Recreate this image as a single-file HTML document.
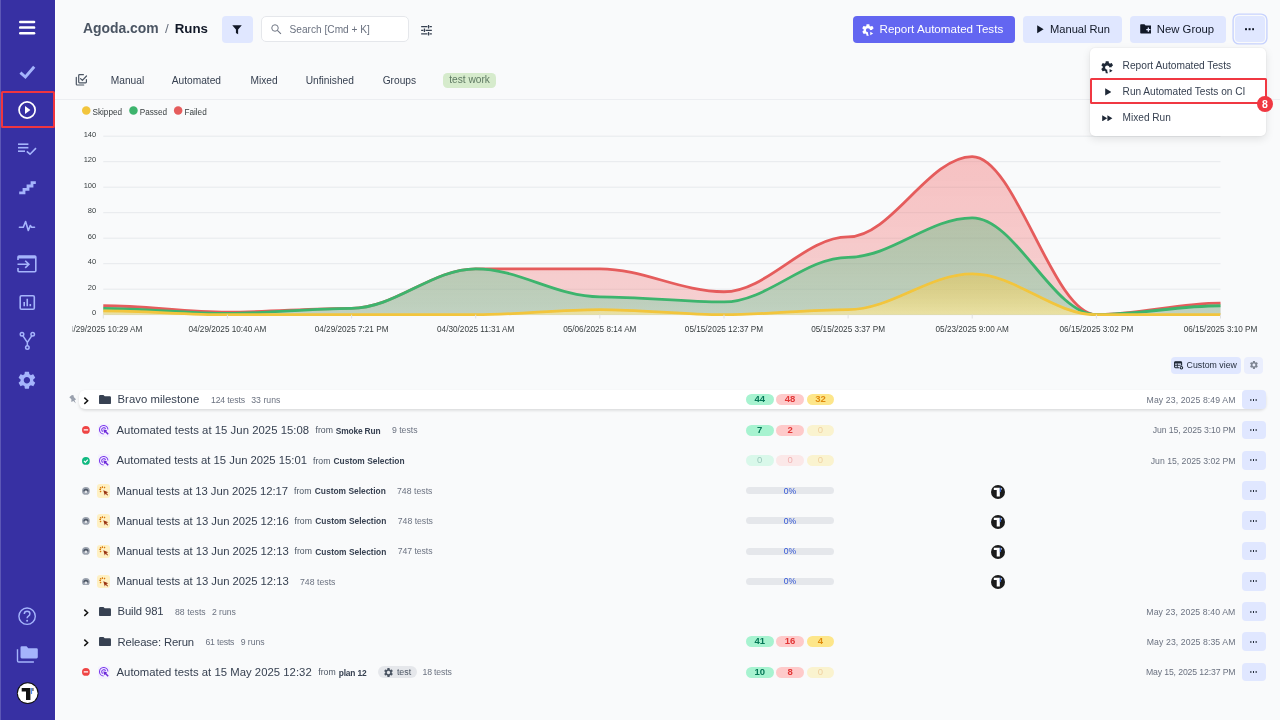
<!DOCTYPE html>
<html lang="en">
<head>
<meta charset="utf-8">
<title>Runs</title>
<style>
*{box-sizing:border-box;margin:0;padding:0}
html,body{width:1280px;height:720px;overflow:hidden}
body{background:#f9fafb;font-family:"Liberation Sans",sans-serif;color:#374151;position:relative}
#app{position:absolute;left:0;top:0;width:1280px;height:720px;will-change:transform}
.abs{position:absolute;display:block}
.tx{position:absolute;white-space:nowrap;line-height:16px;display:block}
#side{position:absolute;left:0;top:0;width:55.200px;height:720px;background:#3730a3;box-shadow:inset 1px 0 0 #5d57b6}
#side svg{position:absolute;display:block}
.sel{position:absolute;left:1.200px;top:90.900px;width:54px;height:36.700px;border:2.200px solid #f0353f;border-radius:1.500px}
.btn{position:absolute;top:16px;height:26.500px;border-radius:4px;background:#e0e7ff}
.btn.pri{background:#6366f1}
.btn svg{position:absolute}
#search{position:absolute;left:261.250px;top:16px;width:147.250px;height:26px;border:1px solid #e5e7eb;border-radius:5px;background:#fff}
.tag{position:absolute;left:443.250px;top:73px;width:52.250px;height:14.500px;border-radius:4.500px;background:#d6ebcc}
.hr{position:absolute;left:55px;right:0;top:98.500px;height:1px;background:#eceef1}
.leg{position:absolute;top:106.300px;width:8.500px;height:8.500px;border-radius:50%}
.ax{font-size:8.200px;fill:#373d3f;font-family:"Liberation Sans",sans-serif}
.ay{font-size:7.500px;fill:#373d3f;font-family:"Liberation Sans",sans-serif;dominant-baseline:central}
#menu{position:absolute;left:1089.500px;top:48.300px;width:176px;height:87.300px;background:#fff;border-radius:5px;box-shadow:0 3px 8px rgba(0,0,0,.10),0 0 2px rgba(0,0,0,.10)}
.hl{position:absolute;left:1090.100px;top:78.300px;width:177px;height:26.200px;border:2.100px solid #f03842;border-radius:1.500px}
.n8{position:absolute;left:1257px;top:96.300px;width:16px;height:16px;border-radius:50%;background:#f03842}
.cv{position:absolute;left:1170.600px;top:356.500px;width:70.700px;height:17.250px;border-radius:4px;background:#e0e7ff}
.cg{position:absolute;left:1244.100px;top:356.500px;width:18.800px;height:17.250px;border-radius:4px;background:#eaeefd}
.rowbg{position:absolute;left:78.750px;width:1187px;height:18.450px;background:#fff;border-radius:6px;box-shadow:0 1.500px 3px rgba(0,0,0,.13),0 0 1px rgba(0,0,0,.06)}
.mb{position:absolute;left:1241.500px;width:24px;height:18.800px;border-radius:4px;background:#e0e7ff}
.dots{position:absolute;left:1252.900px;width:1.600px;height:2px;background:#1f2937;box-shadow:2.650px 0 #1f2937,-2.650px 0 #1f2937}
.pill{position:absolute;width:27.700px;height:11px;border-radius:5.500px;font-size:9.500px;line-height:10.700px;text-align:center}
.bar{position:absolute;left:746.250px;width:88px;height:7px;border-radius:3.500px;background:#e5e7eb}
</style>
</head>
<body>
<div id="app">

<!-- SIDEBAR -->
<div id="side">
<svg style="left:0;top:0" width="56" height="720" viewBox="0 0 56 720">
  <!-- hamburger -->
  <g fill="#fff"><rect x="19" y="20.700" width="16.300" height="2.500" rx="1.200"/><rect x="19" y="26.350" width="16.300" height="2.500" rx="1.200"/><rect x="19" y="32" width="16.300" height="2.500" rx="1.200"/></g>
  <!-- check -->
  <path d="M20.400 72.600 L25.400 77 L34.200 66.700" fill="none" stroke="#a5b4fc" stroke-width="2.900"/>
  <!-- play circle -->
  <circle cx="27.100" cy="110" r="8.050" fill="none" stroke="#fff" stroke-width="1.700"/><path d="M25 105.900 L30.400 110 L25 114.100 Z" fill="#fff"/>
  <!-- list check -->
  <g stroke="#a5b4fc" stroke-width="1.600" fill="none"><path d="M18 144.200 H28.400"/><path d="M18 147.700 H28.400"/><path d="M18 151.200 H25"/><path d="M26.800 151.300 L30 154.200 L36 148.100"/></g>
  <!-- stairs -->
  <path d="M19.200 192.800 H24 V189.400 H28 V186 H32 V182.700 H35.800" fill="none" stroke="#a5b4fc" stroke-width="2.800" stroke-linejoin="miter"/>
  <!-- pulse -->
  <path d="M19.400 227.300 H23.300 L25.600 221.500 L28.300 230.500 L30.300 225.500 L31.600 227.300 H34.500" fill="none" stroke="#a5b4fc" stroke-width="1.600" stroke-linejoin="round" stroke-linecap="round"/>
  <!-- import -->
  <path d="M18 260 V257.100 Q18 256.100 19 256.100 H34.800 Q35.800 256.100 35.800 257.100 V270.800 Q35.800 271.800 34.800 271.800 H19 Q18 271.800 18 270.800 V268" fill="none" stroke="#a5b4fc" stroke-width="1.600"/><path d="M18 257.300 H35.800" stroke="#a5b4fc" stroke-width="2.400"/><path d="M17.500 264.300 H28.500 M25.200 260.700 L28.900 264.300 L25.200 267.900" fill="none" stroke="#a5b4fc" stroke-width="1.600"/>
  <!-- chart -->
  <rect x="20.200" y="295.800" width="14.100" height="13.400" rx="1.300" fill="none" stroke="#a5b4fc" stroke-width="1.600"/><path d="M24.200 302 V306.300 M27.250 298.800 V306.300 M30.300 304 V306.300" stroke="#a5b4fc" stroke-width="1.600"/>
  <!-- fork -->
  <g fill="none" stroke="#a5b4fc" stroke-width="1.500"><circle cx="22" cy="334.300" r="1.750"/><circle cx="32.700" cy="334.300" r="1.750"/><circle cx="27.350" cy="347.600" r="1.750"/><path d="M22.800 335.700 L27.350 342.500 L31.900 335.700 M27.350 342.500 V346"/></g>
  <!-- gear -->
  <g transform="translate(16.300 369.600) scale(0.884)"><path fill="#a5b4fc" d="M19.14 12.94c.04-.3.06-.61.06-.94 0-.32-.02-.64-.07-.94l2.03-1.58a.49.49 0 0 0 .12-.61l-1.92-3.32a.488.488 0 0 0-.59-.22l-2.39.96c-.5-.38-1.03-.7-1.62-.94l-.36-2.54a.484.484 0 0 0-.48-.41h-3.84c-.24 0-.43.17-.47.41l-.36 2.54c-.59.24-1.13.57-1.62.94l-2.39-.96c-.22-.08-.47 0-.59.22L2.740 8.870c-.12.21-.08.47.12.61l2.030 1.580c-.05.3-.09.63-.09.94s.02.64.07.94l-2.030 1.580a.49.49 0 0 0-.12.61l1.920 3.320c.12.22.37.29.59.22l2.390-.96c.5.38 1.030.7 1.620.94l.36 2.540c.05.24.24.41.48.41h3.840c.24 0 .44-.17.47-.41l.36-2.540c.59-.24 1.130-.56 1.620-.94l2.390.96c.22.08.47 0 .59-.22l1.920-3.320c.12-.22.07-.47-.12-.61l-2.010-1.580zM12 15.600c-1.980 0-3.600-1.620-3.600-3.600s1.620-3.600 3.600-3.600 3.600 1.620 3.600 3.600-1.620 3.600-3.600 3.600z"/></g>
  <!-- help -->
  <circle cx="27.100" cy="616.200" r="8.200" fill="none" stroke="#a5b4fc" stroke-width="1.400"/><path d="M24.300 614 Q24.300 611.300 27.100 611.300 Q29.900 611.300 29.900 613.800 Q29.900 615.200 28.400 616.100 Q27.100 616.900 27.100 618.300" fill="none" stroke="#a5b4fc" stroke-width="1.500"/><circle cx="27.100" cy="620.700" r="1" fill="#a5b4fc"/>
  <!-- folders -->
  <path d="M21.800 646.200 H26.500 L28.300 648.200 H36.500 Q37.800 648.200 37.800 649.500 V657.100 Q37.800 658.400 36.500 658.400 H21.800 Q20.500 658.400 20.500 657.100 V647.500 Q20.500 646.200 21.800 646.200 Z" fill="#a5b4fc"/><path d="M17.500 649.200 V660.700 Q17.500 662 18.800 662 H33.900" fill="none" stroke="#a5b4fc" stroke-width="1.400"/>
  <!-- logo -->
  <circle cx="27.700" cy="693.200" r="10.850" fill="#111"/><circle cx="27.700" cy="693.200" r="9.850" fill="#fff"/><path d="M21.700 687.900 H30.400 V700 H26 V691.400 H21.700 Z" fill="#111"/><path d="M30.900 688 H32.100 V694 H30.900 Z" fill="#4f8df5"/><path d="M32.500 688 H33.400 V691 H32.500 Z" fill="#111"/>
</svg>
<div class="sel"></div>
</div>

<div id="strip" class="abs" style="left:55.200px;top:0;width:2.200px;height:720px;background:linear-gradient(90deg,#ffffff,#f9fafb)"></div>
<!-- HEADER -->
<div class="btn" style="left:222px;width:31px"><svg style="left:10.200px;top:8px" width="10.050" height="11.550" viewBox="0 0 11 11"><path d="M0.300 0.500 H10.700 L6.700 5.300 V10.500 L4.300 9 V5.300 Z" fill="#111827"/></svg></div>
<div id="search"><svg style="position:absolute;left:8.750px;top:7.300px" width="10.500" height="10.500" viewBox="0 0 11 11"><circle cx="4.200" cy="4.200" r="3.400" fill="none" stroke="#6b7280" stroke-width="1"/><path d="M6.700 6.700 L10.400 10.400" stroke="#6b7280" stroke-width="1.100"/></svg></div>
<svg class="abs" style="left:419.800px;top:24px" width="13" height="12.500" viewBox="0 0 14 14"><g stroke="#374151" stroke-width="1.400" fill="none"><path d="M1 3 H8 M10.500 3 H13 M9.300 1 V5"/><path d="M1 7 H3.500 M6 7 H13 M4.700 5 V9"/><path d="M1 11 H8 M10.500 11 H13 M9.300 9 V13"/></g></svg>

<div class="btn pri" style="left:852.500px;width:162.300px"><svg style="left:8.700px;top:7.300px" width="13.900" height="13.900" viewBox="0 0 24 24"><path fill="#fff" d="M13.54 22H10C9.75 22 9.54 21.82 9.5 21.58L9.13 18.93C8.5 18.68 7.96 18.34 7.44 17.94L4.95 18.95C4.73 19.03 4.46 18.95 4.34 18.73L2.34 15.27C2.21 15.05 2.27 14.78 2.46 14.63L4.57 12.97L4.5 12L4.57 11L2.46 9.37C2.27 9.22 2.21 8.95 2.34 8.73L4.34 5.27C4.46 5.05 4.73 4.96 4.95 5.05L7.44 6.05C7.96 5.66 8.5 5.32 9.13 5.07L9.5 2.42C9.54 2.18 9.75 2 10 2H14C14.25 2 14.46 2.18 14.5 2.42L14.87 5.07C15.5 5.32 16.04 5.66 16.56 6.05L19.05 5.05C19.27 4.96 19.54 5.05 19.66 5.27L21.66 8.73C21.79 8.95 21.73 9.22 21.54 9.37L19.43 11L19.5 12V12.19C19 12.07 18.5 12 18 12C17.17 12 16.39 12.18 15.68 12.5C15.59 10.5 14 9 12 9C10.07 9 8.5 10.57 8.5 12.5C8.5 14.43 10.07 16 12 16C12.04 16 12.09 16 12.14 16C12.05 16.32 12 16.66 12 17C12 18.95 12.57 20.7 13.54 22M16 15V21L21 18L16 15Z"/></svg></div>
<div class="btn" style="left:1023px;width:99px"><svg style="left:13.700px;top:9.300px" width="7" height="8.400" viewBox="0 0 7 8.400"><path d="M0.200 0.200 L6.600 4.200 L0.200 8.200 Z" fill="#111827"/></svg></div>
<div class="btn" style="left:1130px;width:96px"><svg style="left:9.700px;top:8.400px" width="11.800" height="9.800" viewBox="0 0 12 10"><path d="M1 0.300 H4.500 L5.700 1.600 H11 Q11.800 1.600 11.800 2.400 V9 Q11.800 9.800 11 9.800 H1 Q0.200 9.800 0.200 9 V1.100 Q0.200 0.300 1 0.300 Z" fill="#111827"/><path d="M8.500 3.600 V7.800 M6.400 5.700 H10.600" stroke="#e0e7ff" stroke-width="1.300"/></svg></div>
<div class="btn" style="left:1234.500px;width:30.700px;height:26px;box-shadow:0 0 0 1.200px #f9fafb,0 0 0 2.600px #c7d2fe"><svg style="left:10.700px;top:12.200px" width="9.200" height="2.400" viewBox="0 0 9.200 2.400"><rect x="0" y="0.200" width="2" height="2" fill="#111827"/><rect x="3.600" y="0.200" width="2" height="2" fill="#111827"/><rect x="7.200" y="0.200" width="2" height="2" fill="#111827"/></svg></div>

<!-- TABS -->
<svg class="abs" style="left:70px;top:70px" width="20" height="20" viewBox="70 70 20 20"><g fill="none" stroke="#4b5563" stroke-width="1.200" stroke-linecap="round"><path d="M83.400 74.700 H79.500 Q78.700 74.700 78.700 75.500 V82.100 Q78.700 82.900 79.500 82.900 H85.600 Q86.400 82.900 86.400 82.100 V79.600"/><path d="M76.300 77.400 V84.200 Q76.300 85 77.100 85 H83.700"/><path d="M80.500 78.600 L82.400 80.300 L86.500 76"/></g></svg>
<div class="tag"></div>
<div class="hr"></div>

<!-- LEGEND -->
<!-- CHART -->
<svg class="abs" style="left:0;top:0" width="1280" height="345" viewBox="0 0 1280 345">
<defs>
<clipPath id="cl"><rect x="72.500" y="100" width="1200" height="245"/></clipPath>
<linearGradient id="gf" x1="0" y1="0" x2="0" y2="1"><stop offset="0" stop-color="#ef4444" stop-opacity=".31"/><stop offset="1" stop-color="#f06060" stop-opacity=".27"/></linearGradient>
<linearGradient id="gp" x1="0" y1="0" x2="0" y2="1"><stop offset="0" stop-color="#3db46d" stop-opacity=".35"/><stop offset="1" stop-color="#7fd3ae" stop-opacity=".46"/></linearGradient>
<linearGradient id="gs" x1="0" y1="0" x2="0" y2="1"><stop offset="0" stop-color="#f2c53d" stop-opacity=".42"/><stop offset="1" stop-color="#fae696" stop-opacity=".7"/></linearGradient>
</defs>
<circle cx="86.250" cy="110.550" r="4.250" fill="#f2c53d"/><circle cx="133.450" cy="110.550" r="4.250" fill="#3db46d"/><circle cx="178.150" cy="110.550" r="4.250" fill="#e55c5c"/>
<g clip-path="url(#cl)">
<line x1="103.3" x2="1220.5" y1="314.7" y2="314.7" stroke="#e7e9ec" stroke-width="1"/>
<text x="96.2" y="312.8" text-anchor="end" class="ay">0</text>
<line x1="103.3" x2="1220.5" y1="289.2" y2="289.2" stroke="#e7e9ec" stroke-width="1"/>
<text x="96.2" y="287.3" text-anchor="end" class="ay">20</text>
<line x1="103.3" x2="1220.5" y1="263.7" y2="263.7" stroke="#e7e9ec" stroke-width="1"/>
<text x="96.2" y="261.8" text-anchor="end" class="ay">40</text>
<line x1="103.3" x2="1220.5" y1="238.2" y2="238.2" stroke="#e7e9ec" stroke-width="1"/>
<text x="96.2" y="236.3" text-anchor="end" class="ay">60</text>
<line x1="103.3" x2="1220.5" y1="212.7" y2="212.7" stroke="#e7e9ec" stroke-width="1"/>
<text x="96.2" y="210.8" text-anchor="end" class="ay">80</text>
<line x1="103.3" x2="1220.5" y1="187.2" y2="187.2" stroke="#e7e9ec" stroke-width="1"/>
<text x="96.2" y="185.3" text-anchor="end" class="ay">100</text>
<line x1="103.3" x2="1220.5" y1="161.7" y2="161.7" stroke="#e7e9ec" stroke-width="1"/>
<text x="96.2" y="159.8" text-anchor="end" class="ay">120</text>
<line x1="103.3" x2="1220.5" y1="136.2" y2="136.2" stroke="#e7e9ec" stroke-width="1"/>
<text x="96.2" y="134.3" text-anchor="end" class="ay">140</text>
<path d="M103.30 305.77 C146.75 305.77 183.99 312.15 227.43 312.15 C270.88 312.15 308.12 308.32 351.57 308.32 C395.01 308.32 432.25 268.80 475.70 268.80 C519.15 268.80 556.39 268.80 599.83 268.80 C643.28 268.80 680.52 291.75 723.97 291.75 C767.41 291.75 804.65 236.92 848.10 236.92 C891.55 236.92 928.79 156.60 972.23 156.60 C1015.68 156.60 1052.92 314.70 1096.37 314.70 C1139.81 314.70 1177.05 303.22 1220.50 303.22 L1220.5 314.7 L103.3 314.7 Z" fill="url(#gf)"/>
<path d="M103.30 305.77 C146.75 305.77 183.99 312.15 227.43 312.15 C270.88 312.15 308.12 308.32 351.57 308.32 C395.01 308.32 432.25 268.80 475.70 268.80 C519.15 268.80 556.39 268.80 599.83 268.80 C643.28 268.80 680.52 291.75 723.97 291.75 C767.41 291.75 804.65 236.92 848.10 236.92 C891.55 236.92 928.79 156.60 972.23 156.60 C1015.68 156.60 1052.92 314.70 1096.37 314.70 C1139.81 314.70 1177.05 303.22 1220.50 303.22" fill="none" stroke="#e55c5c" stroke-width="2.8" stroke-linecap="butt"/>
<path d="M103.30 308.32 C146.75 308.32 183.99 313.43 227.43 313.43 C270.88 313.43 308.12 308.32 351.57 308.32 C395.01 308.32 432.25 268.80 475.70 268.80 C519.15 268.80 556.39 296.85 599.83 296.85 C643.28 296.85 680.52 301.95 723.97 301.95 C767.41 301.95 804.65 257.32 848.10 257.32 C891.55 257.32 928.79 217.80 972.23 217.80 C1015.68 217.80 1052.92 314.70 1096.37 314.70 C1139.81 314.70 1177.05 305.77 1220.50 305.77 L1220.5 314.7 L103.3 314.7 Z" fill="url(#gp)"/>
<path d="M103.30 308.32 C146.75 308.32 183.99 313.43 227.43 313.43 C270.88 313.43 308.12 308.32 351.57 308.32 C395.01 308.32 432.25 268.80 475.70 268.80 C519.15 268.80 556.39 296.85 599.83 296.85 C643.28 296.85 680.52 301.95 723.97 301.95 C767.41 301.95 804.65 257.32 848.10 257.32 C891.55 257.32 928.79 217.80 972.23 217.80 C1015.68 217.80 1052.92 314.70 1096.37 314.70 C1139.81 314.70 1177.05 305.77 1220.50 305.77" fill="none" stroke="#3db46d" stroke-width="2.8" stroke-linecap="butt"/>
<path d="M103.30 310.88 C146.75 310.88 183.99 314.70 227.43 314.70 C270.88 314.70 308.12 314.70 351.57 314.70 C395.01 314.70 432.25 314.70 475.70 314.70 C519.15 314.70 556.39 309.60 599.83 309.60 C643.28 309.60 680.52 314.70 723.97 314.70 C767.41 314.70 804.65 309.60 848.10 309.60 C891.55 309.60 928.79 273.90 972.23 273.90 C1015.68 273.90 1052.92 314.70 1096.37 314.70 C1139.81 314.70 1177.05 314.70 1220.50 314.70 L1220.5 314.7 L103.3 314.7 Z" fill="url(#gs)"/>
<path d="M103.30 310.88 C146.75 310.88 183.99 314.70 227.43 314.70 C270.88 314.70 308.12 314.70 351.57 314.70 C395.01 314.70 432.25 314.70 475.70 314.70 C519.15 314.70 556.39 309.60 599.83 309.60 C643.28 309.60 680.52 314.70 723.97 314.70 C767.41 314.70 804.65 309.60 848.10 309.60 C891.55 309.60 928.79 273.90 972.23 273.90 C1015.68 273.90 1052.92 314.70 1096.37 314.70 C1139.81 314.70 1177.05 314.70 1220.50 314.70" fill="none" stroke="#f2c53d" stroke-width="2.8" stroke-linecap="butt"/>
<line x1="103.3" x2="103.3" y1="314.7" y2="318.5" stroke="#e0e0e0"/>
<text x="103.3" y="332.3" text-anchor="middle" class="ax">04/29/2025 10:29 AM</text>
<line x1="227.4" x2="227.4" y1="314.7" y2="318.5" stroke="#e0e0e0"/>
<text x="227.4" y="332.3" text-anchor="middle" class="ax">04/29/2025 10:40 AM</text>
<line x1="351.6" x2="351.6" y1="314.7" y2="318.5" stroke="#e0e0e0"/>
<text x="351.6" y="332.3" text-anchor="middle" class="ax">04/29/2025 7:21 PM</text>
<line x1="475.7" x2="475.7" y1="314.7" y2="318.5" stroke="#e0e0e0"/>
<text x="475.7" y="332.3" text-anchor="middle" class="ax">04/30/2025 11:31 AM</text>
<line x1="599.8" x2="599.8" y1="314.7" y2="318.5" stroke="#e0e0e0"/>
<text x="599.8" y="332.3" text-anchor="middle" class="ax">05/06/2025 8:14 AM</text>
<line x1="724.0" x2="724.0" y1="314.7" y2="318.5" stroke="#e0e0e0"/>
<text x="724.0" y="332.3" text-anchor="middle" class="ax">05/15/2025 12:37 PM</text>
<line x1="848.1" x2="848.1" y1="314.7" y2="318.5" stroke="#e0e0e0"/>
<text x="848.1" y="332.3" text-anchor="middle" class="ax">05/15/2025 3:37 PM</text>
<line x1="972.2" x2="972.2" y1="314.7" y2="318.5" stroke="#e0e0e0"/>
<text x="972.2" y="332.3" text-anchor="middle" class="ax">05/23/2025 9:00 AM</text>
<line x1="1096.4" x2="1096.4" y1="314.7" y2="318.5" stroke="#e0e0e0"/>
<text x="1096.4" y="332.3" text-anchor="middle" class="ax">06/15/2025 3:02 PM</text>
<line x1="1220.5" x2="1220.5" y1="314.7" y2="318.5" stroke="#e0e0e0"/>
<text x="1220.5" y="332.3" text-anchor="middle" class="ax">06/15/2025 3:10 PM</text>
</g>
</svg>

<!-- DROPDOWN -->
<div id="menu">
  <svg class="abs" style="left:10.100px;top:11.400px" width="14.400" height="14.400" viewBox="0 0 24 24"><path fill="#1f2937" d="M13.54 22H10C9.75 22 9.54 21.82 9.5 21.58L9.13 18.93C8.5 18.68 7.96 18.34 7.44 17.94L4.95 18.95C4.73 19.03 4.46 18.95 4.34 18.73L2.34 15.27C2.21 15.05 2.27 14.78 2.46 14.63L4.57 12.97L4.5 12L4.57 11L2.46 9.37C2.27 9.22 2.21 8.95 2.34 8.73L4.34 5.27C4.46 5.05 4.73 4.96 4.95 5.05L7.44 6.05C7.96 5.66 8.5 5.32 9.13 5.07L9.5 2.42C9.54 2.18 9.75 2 10 2H14C14.25 2 14.46 2.18 14.5 2.42L14.87 5.07C15.5 5.32 16.04 5.66 16.56 6.05L19.05 5.05C19.27 4.96 19.54 5.05 19.66 5.27L21.66 8.73C21.79 8.95 21.73 9.22 21.54 9.37L19.43 11L19.5 12V12.19C19 12.07 18.5 12 18 12C17.17 12 16.39 12.18 15.68 12.5C15.59 10.5 14 9 12 9C10.07 9 8.5 10.57 8.5 12.5C8.5 14.43 10.07 16 12 16C12.04 16 12.09 16 12.14 16C12.05 16.32 12 16.66 12 17C12 18.95 12.57 20.7 13.54 22M16 15V21L21 18L16 15Z"/></svg>
  <svg class="abs" style="left:15.300px;top:40.100px" width="6.600" height="7.800" viewBox="0 0 6.600 7.800"><path d="M0.200 0.200 L6.400 3.900 L0.200 7.600 Z" fill="#1f2937"/></svg>
  <svg class="abs" style="left:12.700px;top:66.600px" width="10.600" height="6.600" viewBox="0 0 10.600 6.600"><path d="M0.200 0.200 L5.200 3.300 L0.200 6.400 Z M5.400 0.200 L10.400 3.300 L5.400 6.400 Z" fill="#1f2937"/></svg>
</div>
<div class="hl"></div>
<div class="n8"></div>

<!-- CUSTOM VIEW -->
<div class="cv"><svg class="abs" style="left:3.400px;top:4.300px" width="10" height="10" viewBox="0 0 10 10"><rect x="0.600" y="0.700" width="7" height="6" rx="0.900" fill="none" stroke="#1f2937" stroke-width="1.100"/><rect x="0.600" y="0.700" width="7" height="1.700" rx="0.500" fill="#1f2937"/><path d="M0.600 4.300 H7.600 M3.300 2.400 V6.700" stroke="#1f2937" stroke-width="0.900"/><circle cx="7.400" cy="6.700" r="2.300" fill="#e0e7ff"/><circle cx="7.400" cy="6.700" r="1.250" fill="none" stroke="#1f2937" stroke-width="1.100"/></svg></div>
<div class="cg"><svg class="abs" style="left:4.450px;top:3.700px" width="9.900" height="9.900" viewBox="0 0 24 24"><path fill="#7d8492" d="M19.140 12.940c.04-.3.060-.610.060-.940 0-.320-.020-.640-.070-.940l2.030-1.580a.490.490 0 0 0 .12-.610l-1.920-3.320a.488.488 0 0 0-.590-.220l-2.390.960c-.5-.380-1.030-.7-1.620-.940l-.360-2.540a.484.484 0 0 0-.480-.410h-3.840c-.240 0-.430.170-.470.410l-.360 2.540c-.590.240-1.130.570-1.620.940l-2.390-.960c-.220-.080-.470 0-.590.220L2.740 8.870c-.12.210-.080.470.12.610l2.030 1.580c-.050.3-.090.630-.090.940s.020.640.070.940l-2.030 1.580a.490.490 0 0 0-.12.610l1.920 3.320c.12.220.370.290.590.220l2.390-.960c.5.380 1.030.7 1.620.940l.360 2.540c.050.240.240.410.480.410h3.840c.240 0 .440-.170.470-.410l.360-2.540c.590-.240 1.130-.560 1.620-.940l2.390.960c.22.080.470 0 .590-.220l1.920-3.320c.12-.220.070-.470-.12-.610l-2.010-1.580zM12 15.600c-1.980 0-3.600-1.620-3.600-3.600s1.620-3.600 3.600-3.600 3.600 1.620 3.600 3.600-1.620 3.600-3.600 3.600z"/></svg></div>

<!-- ROWS -->
<div class="rowbg" style="top:390.35px"></div><svg class="abs" style="left:68.80px;top:394.90px" width="7.50" height="8.80" viewBox="0 0 7.500 8.800"><path d="M2.600 0.300 L4.300 0 L5 2.300 L7.300 4.400 L5.500 5.300 L6.900 8.600 L4.400 5.900 L2.300 6.900 L2.400 4.200 L0.300 2.200 Z" fill="#9aa1ae"/></svg><svg class="abs" style="left:82.50px;top:397.05px" width="6.00" height="7.50" viewBox="0 0 6 7.500"><path d="M1.300 0.600 L4.700 3.750 L1.300 6.900" fill="none" stroke="#111" stroke-width="1.450"/></svg><svg class="abs" style="left:99.00px;top:394.70px" width="12.00" height="9.20" viewBox="0 0 13 10"><path d="M1.200 0 H4.800 L6.200 1.400 H11.800 Q13 1.400 13 2.600 V8.800 Q13 10 11.800 10 H1.200 Q0 10 0 8.800 V1.200 Q0 0 1.200 0 Z" fill="#374152"/></svg><span class="tx" style="left:117.50px;top:391.20px;font-size:11.30px;color:#374151;letter-spacing:0.048px;">Bravo milestone</span><span class="tx" style="left:211.00px;top:391.92px;font-size:8.70px;color:#6b7280;letter-spacing:-0.145px;">124 tests</span><span class="tx" style="left:251.25px;top:391.92px;font-size:8.70px;color:#6b7280;letter-spacing:0.033px;">33 runs</span><span class="pill" style="left:745.90px;top:394.00px;background:#a7f3d0;color:#047857;font-weight:700;">44</span><span class="pill" style="left:776.25px;top:394.00px;background:#fecaca;color:#e23636;font-weight:700;">48</span><span class="pill" style="left:806.60px;top:394.00px;background:#fde68a;color:#e08a0b;font-weight:700;">32</span><span class="tx" style="left:1146.60px;top:391.70px;font-size:8.70px;color:#6b7280;letter-spacing:0.097px;">May 23, 2025 8:49 AM</span><span class="mb" style="top:390.10px"></span><span class="dots" style="top:398.50px"></span>
<svg class="abs" style="left:82.30px;top:426.40px" width="7.80" height="7.80" viewBox="0 0 8 8"><circle cx="4" cy="4" r="4" fill="#ef4444"/><rect x="1.700" y="3.300" width="4.600" height="1.400" rx="0.400" fill="#fff"/></svg><span class="abs" style="left:97.500px;top:424.05px;width:12.500px;height:12.500px;border-radius:3px;background:#f4f1fe"></span><svg class="abs" style="left:99.00px;top:425.30px" width="10.00" height="10.00" viewBox="0 0 10 10"><g fill="none" stroke="#7c3aed" stroke-width="1.050"><path d="M4.600 8.900 A4.200 4.200 0 1 1 8.900 4.600"/><path d="M4.200 6.600 A2 2 0 1 1 6.600 4.200"/></g><path d="M5.500 5.500 L9.200 9.200" stroke="#6d28d9" stroke-width="1.500"/><path d="M4.300 4.300 L8.200 5.400 L5.400 8.200 Z" fill="#6d28d9"/></svg><span class="tx" style="left:116.50px;top:422.00px;font-size:11.30px;color:#374151;letter-spacing:0.049px;">Automated tests at 15 Jun 2025 15:08</span><span class="tx" style="left:315.50px;top:422.42px;font-size:8.70px;color:#4b5563;letter-spacing:0.025px;">from</span><span class="tx" style="left:335.75px;top:422.52px;font-size:8.40px;color:#374151;font-weight:700;letter-spacing:-0.162px;">Smoke Run</span><span class="tx" style="left:392.00px;top:422.42px;font-size:8.70px;color:#6b7280;letter-spacing:-0.018px;">9 tests</span><span class="pill" style="left:745.90px;top:424.50px;background:#a7f3d0;color:#047857;font-weight:700;">7</span><span class="pill" style="left:776.25px;top:424.50px;background:#fecaca;color:#e23636;font-weight:700;">2</span><span class="pill" style="left:806.60px;top:424.50px;background:#fde68a;color:#e08a0b; opacity:.38;">0</span><span class="tx" style="left:1152.75px;top:422.20px;font-size:8.70px;color:#6b7280;letter-spacing:-0.114px;">Jun 15, 2025 3:10 PM</span><span class="mb" style="top:420.60px"></span><span class="dots" style="top:429.00px"></span>
<svg class="abs" style="left:82.30px;top:456.80px" width="7.80" height="7.80" viewBox="0 0 8 8"><circle cx="4" cy="4" r="4" fill="#10b981"/><path d="M2 4.100 L3.400 5.500 L6 2.700" fill="none" stroke="#fff" stroke-width="1.100"/></svg><span class="abs" style="left:97.500px;top:454.45px;width:12.500px;height:12.500px;border-radius:3px;background:#f4f1fe"></span><svg class="abs" style="left:99.00px;top:455.70px" width="10.00" height="10.00" viewBox="0 0 10 10"><g fill="none" stroke="#7c3aed" stroke-width="1.050"><path d="M4.600 8.900 A4.200 4.200 0 1 1 8.900 4.600"/><path d="M4.200 6.600 A2 2 0 1 1 6.600 4.200"/></g><path d="M5.500 5.500 L9.200 9.200" stroke="#6d28d9" stroke-width="1.500"/><path d="M4.300 4.300 L8.200 5.400 L5.400 8.200 Z" fill="#6d28d9"/></svg><span class="tx" style="left:116.50px;top:452.40px;font-size:11.30px;color:#374151;letter-spacing:-0.013px;">Automated tests at 15 Jun 2025 15:01</span><span class="tx" style="left:313.00px;top:452.82px;font-size:8.70px;color:#4b5563;letter-spacing:0.025px;">from</span><span class="tx" style="left:333.50px;top:452.92px;font-size:8.40px;color:#374151;font-weight:700;letter-spacing:0.019px;">Custom Selection</span><span class="pill" style="left:745.90px;top:454.90px;background:#a7f3d0;color:#047857; opacity:.38;">0</span><span class="pill" style="left:776.25px;top:454.90px;background:#fecaca;color:#e23636; opacity:.38;">0</span><span class="pill" style="left:806.60px;top:454.90px;background:#fde68a;color:#e08a0b; opacity:.38;">0</span><span class="tx" style="left:1150.80px;top:452.60px;font-size:8.70px;color:#6b7280;letter-spacing:-0.016px;">Jun 15, 2025 3:02 PM</span><span class="mb" style="top:451.00px"></span><span class="dots" style="top:459.40px"></span>
<svg class="abs" style="left:82.30px;top:487.00px" width="7.80" height="7.80" viewBox="0 0 8 8"><circle cx="4" cy="4" r="4" fill="#9ca3af"/><path d="M1.300 4.600 A2.700 2.700 0 0 1 6.700 4.600 Z" fill="#4b5563"/><circle cx="4" cy="5" r="1.300" fill="#e5e7eb"/></svg><span class="abs" style="left:97px;top:484.15px;width:13.300px;height:13.500px;border-radius:3px;background:#fef0c3"></span><svg class="abs" style="left:98.70px;top:485.90px" width="10.00" height="10.00" viewBox="0 0 10 10"><path d="M4.300 4.300 L9.300 6.200 L7.300 7.100 L9.100 8.900 L8.400 9.600 L6.600 7.800 L5.800 9.600 Z" fill="#9a3412"/><g stroke="#d97706" stroke-width="1.100"><path d="M3.400 0.300 V2 M0.300 3.400 H2 M1.100 1.100 L2.300 2.300 M6 0.900 L5 2.200 M0.900 6 L2.200 5"/></g></svg><span class="tx" style="left:116.50px;top:482.60px;font-size:11.30px;color:#374151;letter-spacing:-0.057px;">Manual tests at 13 Jun 2025 12:17</span><span class="tx" style="left:294.00px;top:483.02px;font-size:8.70px;color:#4b5563;letter-spacing:0.025px;">from</span><span class="tx" style="left:314.75px;top:483.12px;font-size:8.40px;color:#374151;font-weight:700;letter-spacing:0.019px;">Custom Selection</span><span class="tx" style="left:397.00px;top:483.02px;font-size:8.70px;color:#6b7280;letter-spacing:0.022px;">748 tests</span><span class="bar" style="top:487.20px"></span><span class="tx" style="left:783.75px;top:482.80px;font-size:8.65px;color:#2f54d6;">0%</span><svg class="abs" overflow="visible" style="left:990.50px;top:484.60px" width="14.00" height="14.00" viewBox="0 0 24 24"><circle cx="12" cy="12" r="13" fill="#fff"/><circle cx="12" cy="12" r="12" fill="#1b1b1b"/><path d="M4.800 4.500 H15.100 V19.500 H9.800 V8.700 H4.800 Z" fill="#fff"/><path d="M15.100 4.500 H16.800 V12.200 H15.100 Z" fill="#3f6fe0"/><path d="M17.500 5 H18.900 V8 H17.500 Z" fill="#c9ccd1"/></svg><span class="mb" style="top:481.20px"></span><span class="dots" style="top:489.60px"></span>
<svg class="abs" style="left:82.30px;top:517.20px" width="7.80" height="7.80" viewBox="0 0 8 8"><circle cx="4" cy="4" r="4" fill="#9ca3af"/><path d="M1.300 4.600 A2.700 2.700 0 0 1 6.700 4.600 Z" fill="#4b5563"/><circle cx="4" cy="5" r="1.300" fill="#e5e7eb"/></svg><span class="abs" style="left:97px;top:514.35px;width:13.300px;height:13.500px;border-radius:3px;background:#fef0c3"></span><svg class="abs" style="left:98.70px;top:516.10px" width="10.00" height="10.00" viewBox="0 0 10 10"><path d="M4.300 4.300 L9.300 6.200 L7.300 7.100 L9.100 8.900 L8.400 9.600 L6.600 7.800 L5.800 9.600 Z" fill="#9a3412"/><g stroke="#d97706" stroke-width="1.100"><path d="M3.400 0.300 V2 M0.300 3.400 H2 M1.100 1.100 L2.300 2.300 M6 0.900 L5 2.200 M0.900 6 L2.200 5"/></g></svg><span class="tx" style="left:116.50px;top:512.80px;font-size:11.30px;color:#374151;letter-spacing:-0.035px;">Manual tests at 13 Jun 2025 12:16</span><span class="tx" style="left:294.50px;top:513.22px;font-size:8.70px;color:#4b5563;letter-spacing:0.025px;">from</span><span class="tx" style="left:315.25px;top:513.32px;font-size:8.40px;color:#374151;font-weight:700;letter-spacing:0.019px;">Custom Selection</span><span class="tx" style="left:397.75px;top:513.22px;font-size:8.70px;color:#6b7280;letter-spacing:-0.006px;">748 tests</span><span class="bar" style="top:517.40px"></span><span class="tx" style="left:783.75px;top:513.00px;font-size:8.65px;color:#2f54d6;">0%</span><svg class="abs" overflow="visible" style="left:990.50px;top:514.80px" width="14.00" height="14.00" viewBox="0 0 24 24"><circle cx="12" cy="12" r="13" fill="#fff"/><circle cx="12" cy="12" r="12" fill="#1b1b1b"/><path d="M4.800 4.500 H15.100 V19.500 H9.800 V8.700 H4.800 Z" fill="#fff"/><path d="M15.100 4.500 H16.800 V12.200 H15.100 Z" fill="#3f6fe0"/><path d="M17.500 5 H18.900 V8 H17.500 Z" fill="#c9ccd1"/></svg><span class="mb" style="top:511.40px"></span><span class="dots" style="top:519.80px"></span>
<svg class="abs" style="left:82.30px;top:547.40px" width="7.80" height="7.80" viewBox="0 0 8 8"><circle cx="4" cy="4" r="4" fill="#9ca3af"/><path d="M1.300 4.600 A2.700 2.700 0 0 1 6.700 4.600 Z" fill="#4b5563"/><circle cx="4" cy="5" r="1.300" fill="#e5e7eb"/></svg><span class="abs" style="left:97px;top:544.55px;width:13.300px;height:13.500px;border-radius:3px;background:#fef0c3"></span><svg class="abs" style="left:98.70px;top:546.30px" width="10.00" height="10.00" viewBox="0 0 10 10"><path d="M4.300 4.300 L9.300 6.200 L7.300 7.100 L9.100 8.900 L8.400 9.600 L6.600 7.800 L5.800 9.600 Z" fill="#9a3412"/><g stroke="#d97706" stroke-width="1.100"><path d="M3.400 0.300 V2 M0.300 3.400 H2 M1.100 1.100 L2.300 2.300 M6 0.900 L5 2.200 M0.900 6 L2.200 5"/></g></svg><span class="tx" style="left:116.50px;top:543.00px;font-size:11.30px;color:#374151;letter-spacing:-0.035px;">Manual tests at 13 Jun 2025 12:13</span><span class="tx" style="left:294.50px;top:543.42px;font-size:8.70px;color:#4b5563;letter-spacing:0.025px;">from</span><span class="tx" style="left:315.25px;top:543.52px;font-size:8.40px;color:#374151;font-weight:700;letter-spacing:0.019px;">Custom Selection</span><span class="tx" style="left:397.75px;top:543.42px;font-size:8.70px;color:#6b7280;letter-spacing:-0.062px;">747 tests</span><span class="bar" style="top:547.60px"></span><span class="tx" style="left:783.75px;top:543.20px;font-size:8.65px;color:#2f54d6;">0%</span><svg class="abs" overflow="visible" style="left:990.50px;top:545.00px" width="14.00" height="14.00" viewBox="0 0 24 24"><circle cx="12" cy="12" r="13" fill="#fff"/><circle cx="12" cy="12" r="12" fill="#1b1b1b"/><path d="M4.800 4.500 H15.100 V19.500 H9.800 V8.700 H4.800 Z" fill="#fff"/><path d="M15.100 4.500 H16.800 V12.200 H15.100 Z" fill="#3f6fe0"/><path d="M17.500 5 H18.900 V8 H17.500 Z" fill="#c9ccd1"/></svg><span class="mb" style="top:541.60px"></span><span class="dots" style="top:550.00px"></span>
<svg class="abs" style="left:82.30px;top:577.60px" width="7.80" height="7.80" viewBox="0 0 8 8"><circle cx="4" cy="4" r="4" fill="#9ca3af"/><path d="M1.300 4.600 A2.700 2.700 0 0 1 6.700 4.600 Z" fill="#4b5563"/><circle cx="4" cy="5" r="1.300" fill="#e5e7eb"/></svg><span class="abs" style="left:97px;top:574.75px;width:13.300px;height:13.500px;border-radius:3px;background:#fef0c3"></span><svg class="abs" style="left:98.70px;top:576.50px" width="10.00" height="10.00" viewBox="0 0 10 10"><path d="M4.300 4.300 L9.300 6.200 L7.300 7.100 L9.100 8.900 L8.400 9.600 L6.600 7.800 L5.800 9.600 Z" fill="#9a3412"/><g stroke="#d97706" stroke-width="1.100"><path d="M3.400 0.300 V2 M0.300 3.400 H2 M1.100 1.100 L2.300 2.300 M6 0.900 L5 2.200 M0.900 6 L2.200 5"/></g></svg><span class="tx" style="left:116.50px;top:573.20px;font-size:11.30px;color:#374151;letter-spacing:-0.035px;">Manual tests at 13 Jun 2025 12:13</span><span class="tx" style="left:300.00px;top:573.62px;font-size:8.70px;color:#6b7280;letter-spacing:0.022px;">748 tests</span><span class="bar" style="top:577.80px"></span><span class="tx" style="left:783.75px;top:573.40px;font-size:8.65px;color:#2f54d6;">0%</span><svg class="abs" overflow="visible" style="left:990.50px;top:575.20px" width="14.00" height="14.00" viewBox="0 0 24 24"><circle cx="12" cy="12" r="13" fill="#fff"/><circle cx="12" cy="12" r="12" fill="#1b1b1b"/><path d="M4.800 4.500 H15.100 V19.500 H9.800 V8.700 H4.800 Z" fill="#fff"/><path d="M15.100 4.500 H16.800 V12.200 H15.100 Z" fill="#3f6fe0"/><path d="M17.500 5 H18.900 V8 H17.500 Z" fill="#c9ccd1"/></svg><span class="mb" style="top:571.80px"></span><span class="dots" style="top:580.20px"></span>
<svg class="abs" style="left:82.50px;top:609.05px" width="6.00" height="7.50" viewBox="0 0 6 7.500"><path d="M1.300 0.600 L4.700 3.750 L1.300 6.900" fill="none" stroke="#111" stroke-width="1.450"/></svg><svg class="abs" style="left:99.00px;top:606.70px" width="12.00" height="9.20" viewBox="0 0 13 10"><path d="M1.200 0 H4.800 L6.200 1.400 H11.800 Q13 1.400 13 2.600 V8.800 Q13 10 11.800 10 H1.200 Q0 10 0 8.800 V1.200 Q0 0 1.200 0 Z" fill="#374152"/></svg><span class="tx" style="left:117.50px;top:603.20px;font-size:11.30px;color:#374151;letter-spacing:-0.125px;">Build 981</span><span class="tx" style="left:175.00px;top:603.92px;font-size:8.70px;color:#6b7280;letter-spacing:0.035px;">88 tests</span><span class="tx" style="left:212.00px;top:603.92px;font-size:8.70px;color:#6b7280;letter-spacing:-0.072px;">2 runs</span><span class="tx" style="left:1146.30px;top:603.70px;font-size:8.70px;color:#6b7280;letter-spacing:0.112px;">May 23, 2025 8:40 AM</span><span class="mb" style="top:602.10px"></span><span class="dots" style="top:610.50px"></span>
<svg class="abs" style="left:82.50px;top:639.35px" width="6.00" height="7.50" viewBox="0 0 6 7.500"><path d="M1.300 0.600 L4.700 3.750 L1.300 6.900" fill="none" stroke="#111" stroke-width="1.450"/></svg><svg class="abs" style="left:99.00px;top:637.00px" width="12.00" height="9.20" viewBox="0 0 13 10"><path d="M1.200 0 H4.800 L6.200 1.400 H11.800 Q13 1.400 13 2.600 V8.800 Q13 10 11.800 10 H1.200 Q0 10 0 8.800 V1.200 Q0 0 1.200 0 Z" fill="#374152"/></svg><span class="tx" style="left:117.50px;top:633.50px;font-size:11.30px;color:#374151;letter-spacing:-0.144px;">Release: Rerun</span><span class="tx" style="left:205.50px;top:634.22px;font-size:8.70px;color:#6b7280;letter-spacing:-0.215px;">61 tests</span><span class="tx" style="left:240.75px;top:634.22px;font-size:8.70px;color:#6b7280;letter-spacing:-0.072px;">9 runs</span><span class="pill" style="left:745.90px;top:636.30px;background:#a7f3d0;color:#047857;font-weight:700;">41</span><span class="pill" style="left:776.25px;top:636.30px;background:#fecaca;color:#e23636;font-weight:700;">16</span><span class="pill" style="left:806.60px;top:636.30px;background:#fde68a;color:#e08a0b;font-weight:700;">4</span><span class="tx" style="left:1146.80px;top:634.00px;font-size:8.70px;color:#6b7280;letter-spacing:0.087px;">May 23, 2025 8:35 AM</span><span class="mb" style="top:632.40px"></span><span class="dots" style="top:640.80px"></span>
<svg class="abs" style="left:82.30px;top:668.40px" width="7.80" height="7.80" viewBox="0 0 8 8"><circle cx="4" cy="4" r="4" fill="#ef4444"/><rect x="1.700" y="3.300" width="4.600" height="1.400" rx="0.400" fill="#fff"/></svg><span class="abs" style="left:97.500px;top:666.05px;width:12.500px;height:12.500px;border-radius:3px;background:#f4f1fe"></span><svg class="abs" style="left:99.00px;top:667.30px" width="10.00" height="10.00" viewBox="0 0 10 10"><g fill="none" stroke="#7c3aed" stroke-width="1.050"><path d="M4.600 8.900 A4.200 4.200 0 1 1 8.900 4.600"/><path d="M4.200 6.600 A2 2 0 1 1 6.600 4.200"/></g><path d="M5.500 5.500 L9.200 9.200" stroke="#6d28d9" stroke-width="1.500"/><path d="M4.300 4.300 L8.200 5.400 L5.400 8.200 Z" fill="#6d28d9"/></svg><span class="tx" style="left:116.50px;top:664.00px;font-size:11.30px;color:#374151;letter-spacing:0.032px;">Automated tests at 15 May 2025 12:32</span><span class="tx" style="left:318.25px;top:664.42px;font-size:8.70px;color:#4b5563;letter-spacing:0.025px;">from</span><span class="tx" style="left:338.75px;top:664.52px;font-size:8.40px;color:#374151;font-weight:700;letter-spacing:-0.171px;">plan 12</span><span class="tx" style="left:422.50px;top:664.42px;font-size:8.70px;color:#6b7280;letter-spacing:-0.171px;">18 tests</span><span class="abs" style="left:377.900px;top:665.600px;width:39px;height:12.800px;border-radius:6.400px;background:#e5e7eb"></span><svg class="abs" style="left:383.40px;top:666.60px" width="11.00" height="11.00" viewBox="0 0 24 24"><path fill="#4b5563" d="M19.140 12.940c.04-.3.060-.610.060-.940 0-.320-.020-.640-.070-.940l2.030-1.580a.490.490 0 0 0 .12-.610l-1.920-3.320a.488.488 0 0 0-.590-.220l-2.390.960c-.5-.380-1.030-.7-1.620-.940l-.360-2.540a.484.484 0 0 0-.480-.410h-3.840c-.240 0-.430.170-.470.410l-.360 2.540c-.590.240-1.130.570-1.620.940l-2.390-.960c-.220-.080-.470 0-.590.220L2.740 8.870c-.12.210-.080.470.12.610l2.030 1.580c-.050.3-.090.630-.090.940s.020.640.070.940l-2.030 1.580a.490.490 0 0 0-.12.610l1.920 3.320c.12.220.370.290.590.220l2.390-.960c.5.380 1.030.7 1.620.940l.360 2.540c.050.240.240.410.480.410h3.840c.240 0 .440-.170.470-.410l.360-2.540c.590-.240 1.130-.560 1.620-.940l2.390.960c.22.080.470 0 .590-.220l1.920-3.320c.12-.220.070-.470-.12-.610l-2.010-1.580zM12 15.600c-1.980 0-3.600-1.620-3.600-3.600s1.620-3.600 3.600-3.600 3.600 1.620 3.600 3.600-1.620 3.600-3.600 3.600z"/></svg><span class="tx" style="left:396.90px;top:664.20px;font-size:8.90px;color:#4b5563;">test</span><span class="pill" style="left:745.90px;top:666.50px;background:#a7f3d0;color:#047857;font-weight:700;">10</span><span class="pill" style="left:776.25px;top:666.50px;background:#fecaca;color:#e23636;font-weight:700;">8</span><span class="pill" style="left:806.60px;top:666.50px;background:#fde68a;color:#e08a0b; opacity:.38;">0</span><span class="tx" style="left:1145.90px;top:664.20px;font-size:8.70px;color:#6b7280;letter-spacing:-0.127px;">May 15, 2025 12:37 PM</span><span class="mb" style="top:662.60px"></span><span class="dots" style="top:671.00px"></span>

<!-- TEXTS -->
<span class="tx" style="left:83.00px;top:18.48px;font-size:13.91px;color:#4b5563;font-weight:700;line-height:20px;">Agoda.com</span>
<span class="tx" style="left:165.00px;top:18.62px;font-size:13.50px;color:#6b7280;line-height:20px;">/</span>
<span class="tx" style="left:174.75px;top:18.69px;font-size:13.30px;color:#111827;font-weight:700;line-height:20px;">Runs</span>
<span class="tx" style="left:289.50px;top:22.20px;font-size:10.16px;color:#6b7280;">Search [Cmd + K]</span>
<span class="tx" style="left:110.75px;top:72.50px;font-size:10.20px;color:#374151;">Manual</span>
<span class="tx" style="left:171.75px;top:72.50px;font-size:10.20px;color:#374151;">Automated</span>
<span class="tx" style="left:250.50px;top:72.50px;font-size:10.20px;color:#374151;">Mixed</span>
<span class="tx" style="left:305.75px;top:72.50px;font-size:10.20px;color:#374151;">Unfinished</span>
<span class="tx" style="left:382.70px;top:72.50px;font-size:10.20px;color:#374151;">Groups</span>
<span class="tx" style="left:879.50px;top:21.00px;font-size:11.61px;color:#fff;">Report Automated Tests</span>
<span class="tx" style="left:1050.00px;top:21.00px;font-size:11.13px;color:#111827;">Manual Run</span>
<span class="tx" style="left:1156.80px;top:21.00px;font-size:11.33px;color:#111827;">New Group</span>
<span class="tx" style="left:1122.60px;top:58.30px;font-size:10.20px;color:#374151;">Report Automated Tests</span>
<span class="tx" style="left:1122.60px;top:84.40px;font-size:10.10px;color:#374151;">Run Automated Tests on CI</span>
<span class="tx" style="left:1122.60px;top:110.30px;font-size:10.10px;color:#374151;">Mixed Run</span>
<span class="tx" style="left:92.50px;top:105.00px;font-size:8.20px;color:#373d3f;">Skipped</span>
<span class="tx" style="left:139.70px;top:105.00px;font-size:8.20px;color:#373d3f;">Passed</span>
<span class="tx" style="left:184.40px;top:105.00px;font-size:8.20px;color:#373d3f;">Failed</span>
<span class="tx" style="left:1186.60px;top:356.80px;font-size:8.79px;color:#1f2937;">Custom view</span>
<span class="tx" style="left:449.25px;top:72.00px;font-size:10.18px;color:#5f7a63;">test work</span>
<span class="tx" style="left:1262.08px;top:96.30px;font-size:10.50px;color:#fff;font-weight:700;">8</span>

</div>
</body>
</html>
